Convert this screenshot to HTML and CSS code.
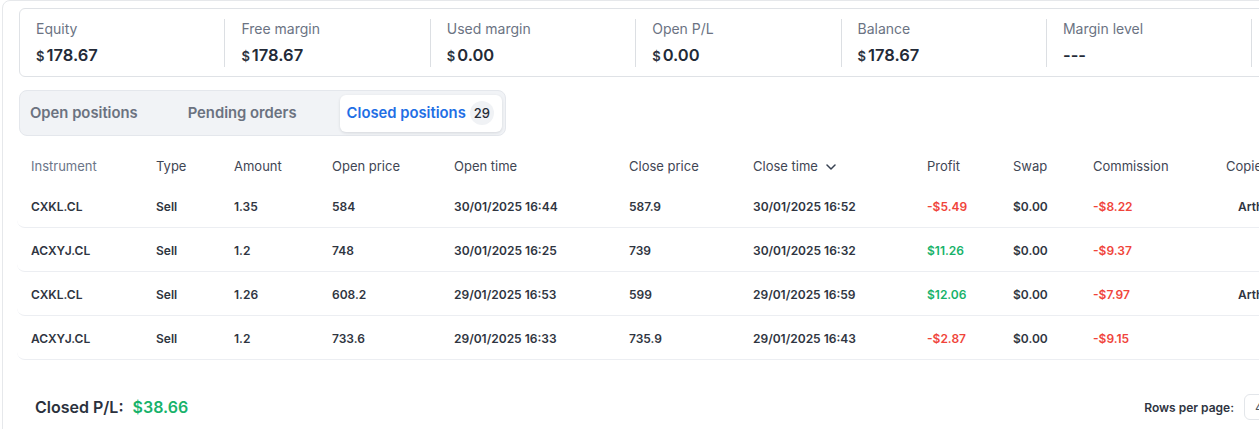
FILE: index.html
```html
<!DOCTYPE html>
<html lang="en">
<head>
<meta charset="utf-8">
<title>Closed positions</title>
<link rel="stylesheet" href="styles.css">
</head>
<body>
<div class="panel">
  <div class="summary">
    <div class="stat"><div class="stat-label">Equity</div><div class="stat-value"><span class="cur">$</span>178.67</div></div>
    <div class="stat"><div class="stat-label">Free margin</div><div class="stat-value"><span class="cur">$</span>178.67</div></div>
    <div class="stat"><div class="stat-label">Used margin</div><div class="stat-value"><span class="cur">$</span>0.00</div></div>
    <div class="stat"><div class="stat-label">Open P/L</div><div class="stat-value"><span class="cur">$</span>0.00</div></div>
    <div class="stat"><div class="stat-label">Balance</div><div class="stat-value"><span class="cur">$</span>178.67</div></div>
    <div class="stat"><div class="stat-label">Margin level</div><div class="stat-value">---</div></div>
    <div class="stat"><div class="stat-label">Credit</div><div class="stat-value"><span class="cur">$</span>0.00</div></div>
  </div>

  <div class="tabs">
    <div class="tab">Open positions</div>
    <div class="tab">Pending orders</div>
    <div class="tab tab-active">Closed positions <span class="badge">29</span></div>
  </div>

  <div class="table">
    <div class="row head">
      <div class="cell first muted">Instrument</div>
      <div class="cell">Type</div>
      <div class="cell">Amount</div>
      <div class="cell">Open price</div>
      <div class="cell">Open time</div>
      <div class="cell">Close price</div>
      <div class="cell sort">Close time <svg class="chev" width="10" height="6" viewBox="0 0 10 6"><path d="M1 1 L5 5 L9 1" fill="none" stroke="#374151" stroke-width="1.5" stroke-linecap="round" stroke-linejoin="round"/></svg></div>
      <div class="cell">Profit</div>
      <div class="cell">Swap</div>
      <div class="cell">Commission</div>
      <div class="cell">Copied by</div>
    </div>
    <div class="row data">
      <div class="cell first">CXKL.CL</div>
      <div class="cell">Sell</div>
      <div class="cell">1.35</div>
      <div class="cell">584</div>
      <div class="cell">30/01/2025 16:44</div>
      <div class="cell">587.9</div>
      <div class="cell">30/01/2025 16:52</div>
      <div class="cell neg">-$5.49</div>
      <div class="cell">$0.00</div>
      <div class="cell neg">-$8.22</div>
      <div class="cell copier">Arthur</div>
    </div>
    <div class="row data">
      <div class="cell first">ACXYJ.CL</div>
      <div class="cell">Sell</div>
      <div class="cell">1.2</div>
      <div class="cell">748</div>
      <div class="cell">30/01/2025 16:25</div>
      <div class="cell">739</div>
      <div class="cell">30/01/2025 16:32</div>
      <div class="cell pos">$11.26</div>
      <div class="cell">$0.00</div>
      <div class="cell neg">-$9.37</div>
      <div class="cell copier"></div>
    </div>
    <div class="row data">
      <div class="cell first">CXKL.CL</div>
      <div class="cell">Sell</div>
      <div class="cell">1.26</div>
      <div class="cell">608.2</div>
      <div class="cell">29/01/2025 16:53</div>
      <div class="cell">599</div>
      <div class="cell">29/01/2025 16:59</div>
      <div class="cell pos">$12.06</div>
      <div class="cell">$0.00</div>
      <div class="cell neg">-$7.97</div>
      <div class="cell copier">Arthur</div>
    </div>
    <div class="row data">
      <div class="cell first">ACXYJ.CL</div>
      <div class="cell">Sell</div>
      <div class="cell">1.2</div>
      <div class="cell">733.6</div>
      <div class="cell">29/01/2025 16:33</div>
      <div class="cell">735.9</div>
      <div class="cell">29/01/2025 16:43</div>
      <div class="cell neg">-$2.87</div>
      <div class="cell">$0.00</div>
      <div class="cell neg">-$9.15</div>
      <div class="cell copier"></div>
    </div>
  </div>

  <div class="footer">
    <div class="total">Closed P/L: <span class="total-value">$38.66</span></div>
    <div class="pager">
      <span class="pager-label">Rows per page:</span>
      <div class="select">40</div>
    </div>
  </div>
</div>
</body>
</html>
```

FILE: styles.css
```css
* { box-sizing: border-box; }

html, body {
  margin: 0;
  padding: 0;
  background: #ffffff;
  overflow: hidden;
}

body {
  font-family: Inter, "Noto Sans", "Liberation Sans", sans-serif;
  color: #1f2937;
  width: 1259px;
  height: 429px;
}

.panel {
  margin-left: 2px;
  width: 1360px;
  min-height: 460px;
  border: 1px solid #e6e8eb;
  border-radius: 8px;
  padding: 7px 0 0 16px;
}

/* summary card */
.summary {
  display: flex;
  width: 1440px;
  border: 1px solid #dfe2e6;
  border-radius: 6px;
  padding: 10px 0 9px 0;
}

.stat {
  flex: 0 0 205.4px;
  height: 48px;
  padding: 0 16px;
  border-right: 1px solid #dcdfe3;
}

.stat-label {
  font-size: 14px;
  line-height: 20px;
  color: #6b7383;
}

.stat-value {
  margin-top: 5px;
  font-size: 16.5px;
  line-height: 23px;
  font-weight: 600;
  color: #232a37;
}

.cur {
  font-size: 13px;
  font-weight: 600;
  margin-right: 2px;
  color: #2d3441;
}

/* tabs */
.tabs {
  display: inline-flex;
  align-items: center;
  gap: 36px;
  margin-top: 13px;
  padding: 3px;
  height: 46px;
  border: 1px solid #e4e7ec;
  border-radius: 8px;
  background: #f1f3f6;
}

.tab {
  display: flex;
  align-items: center;
  height: 37px;
  padding: 0 7px;
  font-size: 14.8px;
  font-weight: 600;
  color: #6b7280;
}

.tab-active {
  padding: 0 8px 0 7px;
  background: #ffffff;
  color: #1f6fe5;
  border-radius: 6px;
  box-shadow: 0 1px 3px rgba(16, 24, 40, 0.12);
}

.badge {
  display: inline-flex;
  align-items: center;
  justify-content: center;
  width: 24px;
  height: 24px;
  margin-left: 4px;
  border-radius: 50%;
  background: #f0f2f5;
  color: #262c38;
  font-size: 13px;
  font-weight: 500;
}

/* table */
.table {
  margin-top: 12px;
  margin-left: -2px;
}

.row {
  display: grid;
  grid-template-columns: 139px 78px 98px 122px 175px 124px 174px 86px 80px 133px 140px;
  align-items: center;
  width: 1349px;
}

.head {
  height: 36px;
  font-size: 13px;
  color: #3f4654;
}

.data {
  height: 44px;
  padding-top: 2px;
  font-size: 12px;
  font-weight: 600;
  color: #2f3541;
  border-bottom: 1px solid #eceef2;
  border-radius: 8px;
}

.cell {
  white-space: nowrap;
}

.first {
  padding-left: 14px;
}

.muted {
  color: #6b7588;
}

.sort {
  display: flex;
  align-items: center;
  gap: 8px;
}

.chev {
  margin-top: 1px;
}

.neg { color: #f0443a; }
.pos { color: #17b26a; }

.copier {
  padding-left: 12px;
}

/* footer */
.footer {
  display: flex;
  align-items: center;
  justify-content: space-between;
  padding: 34px 53px 0 16px;
}

.total {
  font-size: 16px;
  font-weight: 600;
  color: #2b313d;
  line-height: 24px;
}

.total-value {
  margin-left: 5px;
  color: #17b26a;
}

.pager {
  display: flex;
  align-items: center;
  gap: 10px;
}

.pager-label {
  font-size: 12px;
  font-weight: 600;
  color: #2f3542;
}

.select {
  width: 64px;
  height: 26px;
  border: 1px solid #e3e6ea;
  border-radius: 6px;
  padding: 0 10px;
  font-size: 13px;
  line-height: 24px;
  color: #4b5563;
}
```
